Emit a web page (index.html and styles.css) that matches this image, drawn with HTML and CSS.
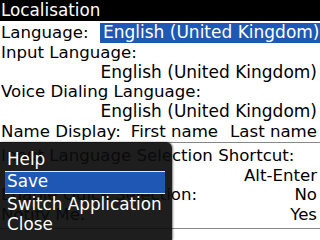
FILE: index.html
```
<!DOCTYPE html>
<html>
<head>
<meta charset="utf-8">
<link rel="stylesheet" href="styles.css">
</head>
<body>
<div class="screen">
  <div class="title">Localisation</div>
  <div class="section first">
    <div class="row"><span class="label">Language:</span><span class="value selected">English (United Kingdom)</span></div>
    <div class="row">Input Language:</div>
    <div class="row right"><span class="value">English (United Kingdom)</span></div>
    <div class="row">Voice Dialing Language:</div>
    <div class="row right"><span class="value">English (United Kingdom)</span></div>
    <div class="row"><span class="label">Name Display:</span><span class="names"><span>First name</span><span>Last name</span></span></div>
  </div>
  <div class="sep"></div>
  <div class="section second">
    <div class="row">Input Language Selection Shortcut:</div>
    <div class="row right">Alt-Enter</div>
    <div class="row split"><span>Enable Quick Selection:</span><span>No</span></div>
    <div class="row split"><span>Notify Me:</span><span>Yes</span></div>
  </div>
  <div class="sep"></div>

  <div class="menu">
    <div class="item">Help</div>
    <div class="item active">Save</div>
    <div class="item">Switch Application</div>
    <div class="item">Close</div>
  </div>
</div>
</body>
</html>
```
FILE: styles.css
```
html, body {
  margin: 0;
  padding: 0;
}
body {
  width: 320px;
  height: 240px;
  overflow: hidden;
  background: #fff;
  font-family: "DejaVu Sans", sans-serif;
  font-size: 16.6px;
  color: #000;
}
.screen {
  position: relative;
  width: 320px;
  height: 240px;
  overflow: hidden;
}
.title {
  background: #000;
  color: #fff;
  height: 21px;
  line-height: 20px;
  padding-left: 1px;
  font-size: 16.8px;
}
.section.first {
  padding-top: 2px;
}
.section.second {
  padding-top: 3px;
  padding-bottom: 3px;
}
.row {
  height: 19.8px;
  line-height: 19.8px;
  padding: 0 3px 0 1px;
  white-space: nowrap;
  display: flex;
  justify-content: space-between;
}
.row.right {
  justify-content: flex-end;
}
.value {
  font-size: 17px;
}
.selected {
  background: #1e58b4;
  color: #fff;
  margin-right: -3px;
  padding: 0 3px;
  flex: 0 0 auto;
  width: 214px;
  text-align: right;
}
.names {
  display: flex;
  gap: 12px;
}
.sep {
  height: 1px;
  background: #888;
}
.menu {
  position: absolute;
  left: 0;
  top: 142px;
  width: 172px;
  height: 98px;
  background: rgba(11, 11, 11, 0.92);
  border-top-right-radius: 6px;
  box-shadow: 1px 0 2px rgba(0, 0, 0, 0.5);
  color: #fff;
  padding-top: 7px;
  box-sizing: border-box;
  font-size: 16.8px;
}
.item {
  height: 20px;
  line-height: 20px;
  margin: 0 7px 0 5px;
  padding-left: 2px;
  white-space: nowrap;
  box-sizing: border-box;
}
.item.active {
  margin-top: 2px;
  height: 23px;
  line-height: 19px;
  padding-bottom: 2px;
  background: #1e58b4;
  border-top: 1px solid #dfe6f2;
  border-bottom: 1px solid #dfe6f2;
}
```
